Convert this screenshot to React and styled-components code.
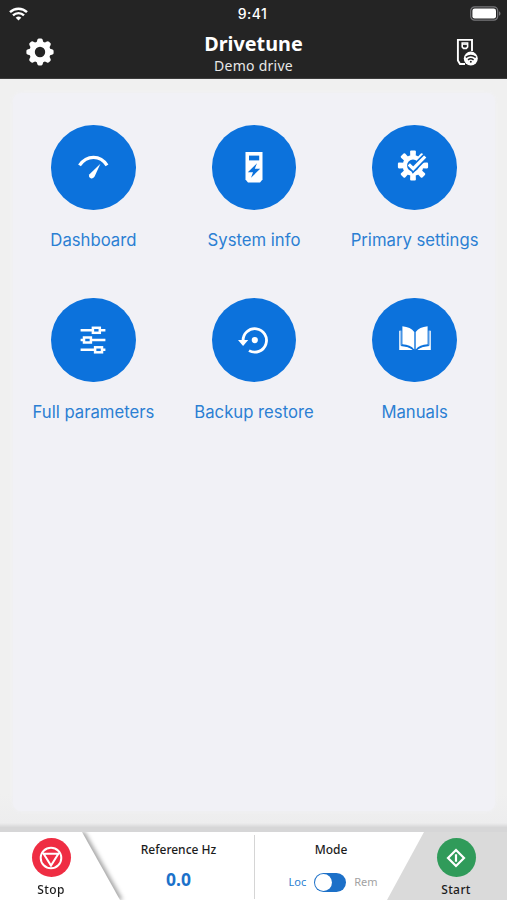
import React from 'react'
import styled, { createGlobalStyle } from 'styled-components'

const GlobalStyle = createGlobalStyle`
  * {
    box-sizing: border-box;
  }
  body {
    margin: 0;
    background-color: #f0f0f0;
    font-family: 'Noto Sans', sans-serif;
  }
`

const teeth = [0, 45, 90, 135, 180, 225, 270, 315]

const WifiIcon = () => (
  <svg width="19" height="14" viewBox="0 0 19 14" fill="none" stroke="#fff" strokeWidth="2.4">
    <path d="M1 5.2a12.2 12.2 0 0 1 17 0" />
    <path d="M4 8.4a7.9 7.9 0 0 1 11 0" />
    <path d="M6.7 10.8a4 4 0 0 1 5.6 0L9.5 13.6z" fill="#fff" stroke="none" />
  </svg>
)

const BatteryIcon = () => (
  <svg width="31" height="15" viewBox="0 0 31 15">
    <rect x="0.7" y="0.8" width="27" height="13.4" rx="4" fill="none" stroke="#77777a" strokeWidth="1.2" />
    <rect x="2.4" y="2.5" width="23.6" height="10" rx="2.3" fill="#fff" />
    <path d="M29 5.2c2 .9 2 3.7 0 4.6z" fill="#77777a" />
  </svg>
)

const GearIcon = () => (
  <svg width="28" height="28" viewBox="-14 -14 28 28" fill="#fff">
    {teeth.map((angle) => (
      <path key={angle} d="M-4-8L-2.5-12.5Q-2.1-13.6-1-13.6H1Q2.1-13.6 2.5-12.5L4-8z" transform={`rotate(${angle})`} />
    ))}
    <circle r="7.9" fill="none" stroke="#fff" strokeWidth="5.4" />
  </svg>
)

const DriveIcon = () => (
  <svg width="22" height="28" viewBox="0 0 22 28" fill="none" stroke="#fff">
    <path d="M16 13V1.9H1.9V22.5L4 26H9" strokeWidth="1.9" />
    <path d="M6.2 5H11.6V9L10.3 10.4H7.5L6.2 9z" strokeWidth="1.6" />
    <path d="M7 6.2h4" strokeWidth="1.3" />
    <circle cx="14.8" cy="20.6" r="7" fill="#fff" stroke="none" />
    <path d="M9.8 19.4q5-4 10 0M12 21.8q2.8-2.1 5.6 0" stroke="#242424" strokeWidth="1.5" />
    <circle cx="14.8" cy="23.8" r="1" fill="#242424" stroke="none" />
  </svg>
)

const DashboardIcon = () => (
  <svg width="36" height="36" viewBox="-18 -18 36 36" fill="#fff">
    <path d="M-13.5-1.6Q-8-9.6 .5-9.6Q9-9.6 14-1.6" fill="none" stroke="#fff" strokeWidth="3.3" />
    <path d="M7.4-3.2L1.6 9.6Q.3 12-2.3 11.2Q-5 9.8-3.5 7.3z" />
  </svg>
)

const SystemIcon = () => (
  <svg width="36" height="36" viewBox="-18 -18 36 36" fill="#fff">
    <path d="M-8.5-15H8.5V12.5L6 15.5H-6L-8.5 12.5z" />
    <path d="M-5-11.4H5.2V-6.6H-5z" fill="#0c72dc" />
    <path d="M3-3.8L-6.2 5.2H-1L-3 10.8L6.2 1.8H.8z" fill="#0c72dc" />
  </svg>
)

const SettingsIcon = () => (
  <svg width="36" height="36" viewBox="-16 -16.5 36 36" fill="#fff">
    {teeth.map((angle) => (
      <path key={angle} d="M-2.7-8L-2.9-14Q-2.9-15.1-1.8-15.1H1.8Q2.9-15.1 2.9-14L2.7-8z" transform={`rotate(${angle})`} />
    ))}
    <circle r="8.2" fill="none" stroke="#fff" strokeWidth="4.5" />
    <path d="M-2-1L.4 3L13-9.8" fill="none" stroke="#0c72dc" strokeWidth="6.5" />
    <path d="M-4.2-1.2L.2 3.2L12.2-9" fill="none" stroke="#fff" strokeWidth="3.2" />
  </svg>
)

const SlidersIcon = () => (
  <svg width="36" height="36" viewBox="-18 -18 36 36" fill="none" stroke="#fff" strokeWidth="2.5">
    <path d="M-12.4-9.7H-.5M7.5-9.7H12.4M-12.4 0H-9.5M-1.5 0H12.4M-12.4 9.8H1.5M9.5 9.8H12.4" />
    <rect x="-.1" y="-12.2" width="6.9" height="5" />
    <rect x="-9" y="-2.5" width="6.9" height="5" />
    <rect x="2.1" y="7.3" width="6.9" height="5" />
  </svg>
)

const RestoreIcon = () => (
  <svg width="36" height="36" viewBox="-18 -18 36 36" fill="#fff">
    <path d="M-10.9 1A11.7 11.7 0 1 1-5 10.6" fill="none" stroke="#fff" strokeWidth="2.8" />
    <path d="M-16 0H-5.8L-10.9 5.9z" />
    <circle cx=".8" cy=".1" r="3.1" />
  </svg>
)

const BookIcon = () => (
  <svg width="36" height="36" viewBox="-18 -18 36 36" fill="#fff">
    <path d="M-12.6-13.8Q-4.3-13-.7-8V9.5Q-4.5 4.8-12.6 4.3zM12.6-13.8Q4.3-13 .7-8V9.5Q4.5 4.8 12.6 4.3z" />
    <path d="M-13.6-9.2H-15.8V10H-2.2Q-6.5 6.5-13.6 6zM13.6-9.2H15.8V10H2.2Q6.5 6.5 13.6 6z" />
    <path d="M-14-9V5.6Q-5.7 5.6-1 10M14-9V5.6Q5.7 5.6 1 10" fill="none" stroke="#0c72dc" strokeWidth=".8" />
  </svg>
)

const StopIcon = () => (
  <svg width="24" height="24" viewBox="-12 -12 24 24" fill="none" stroke="#fff" strokeWidth="2">
    <circle r="10.3" />
    <path d="M-7.4-4.3H7.4L0 7.5z" />
  </svg>
)

const StartIcon = () => (
  <svg width="24" height="24" viewBox="-12 -12 24 24" fill="none" stroke="#fff" strokeWidth="2.2">
    <path d="M0-8L8 0L0 8L-8 0z" />
    <path d="M0-3.8V3.8" />
  </svg>
)

const menu = [
  { label: 'Dashboard', icon: <DashboardIcon /> },
  { label: 'System info', icon: <SystemIcon /> },
  { label: 'Primary settings', icon: <SettingsIcon /> },
  { label: 'Full parameters', icon: <SlidersIcon /> },
  { label: 'Backup restore', icon: <RestoreIcon /> },
  { label: 'Manuals', icon: <BookIcon /> },
]

const App = () => (
  <Screen>
    <GlobalStyle />
    <Header>
      <StatusBar>
        <WifiIcon />
        <Clock>9:41</Clock>
        <BatteryIcon />
      </StatusBar>
      <TitleBar>
        <HeaderButton aria-label="Settings"><GearIcon /></HeaderButton>
        <Titles>
          <Title>Drivetune</Title>
          <Subtitle>Demo drive</Subtitle>
        </Titles>
        <HeaderButton aria-label="Connection"><DriveIcon /></HeaderButton>
      </TitleBar>
    </Header>
    <Content>
      <MenuGrid>
        {menu.map((item) => (
          <MenuItem key={item.label}>
            <IconCircle>{item.icon}</IconCircle>
            <MenuLabel>{item.label}</MenuLabel>
          </MenuItem>
        ))}
      </MenuGrid>
    </Content>
    <ControlBar>
      <StopShadow>
        <StopPanel>
          <ActionCircle $color="#ef2d43"><StopIcon /></ActionCircle>
          <ActionLabel>Stop</ActionLabel>
        </StopPanel>
      </StopShadow>
      <Readout $divider>
        <ReadoutTitle>Reference Hz</ReadoutTitle>
        <Value>0.0</Value>
      </Readout>
      <Readout>
        <ReadoutTitle>Mode</ReadoutTitle>
        <ModeRow>
          <ModeLabel $active>Loc</ModeLabel>
          <Toggle><Knob /></Toggle>
          <ModeLabel>Rem</ModeLabel>
        </ModeRow>
      </Readout>
      <StartPanel>
        <ActionCircle $color="#309b5a"><StartIcon /></ActionCircle>
        <ActionLabel>Start</ActionLabel>
      </StartPanel>
    </ControlBar>
  </Screen>
)

const Screen = styled.div`
  width: 507px;
  height: 900px;
  display: flex;
  flex-direction: column;
  overflow: hidden;
`

const Header = styled.header`
  height: 79px;
  flex-shrink: 0;
  background-color: #242424;
  color: #fff;
  border-bottom: 1px solid #3c3c3c;
`

const StatusBar = styled.div`
  height: 27px;
  padding: 0 6px 0 9px;
  display: grid;
  grid-template-columns: 57px 1fr 60px;
  align-items: center;
  svg:last-child {
    justify-self: end;
  }
`

const Clock = styled.span`
  font-family: Inter, sans-serif;
  font-size: 14px;
  font-weight: 500;
  letter-spacing: 0.4px;
  text-align: center;
  padding-right: 2px;
`

const TitleBar = styled.div`
  height: 51px;
  padding: 0 26px;
  display: flex;
  align-items: center;
  justify-content: space-between;
`

const HeaderButton = styled.button`
  width: 28px;
  height: 28px;
  margin-bottom: 2px;
  padding: 0;
  border: none;
  background: none;
  display: flex;
  justify-content: center;
`

const Titles = styled.div`
  padding-top: 2px;
  display: flex;
  flex-direction: column;
  align-items: center;
`

const Title = styled.h1`
  margin: 0;
  font-size: 19.8px;
  line-height: 24px;
  font-weight: 700;
`

const Subtitle = styled.span`
  font-size: 14px;
  line-height: 20px;
  letter-spacing: 0.25px;
  color: #e8e8e8;
`

const Content = styled.main`
  flex: 1;
  padding: 14px 0 13px 13px;
  background: linear-gradient(#f0f0f0 95%, #ededee 98.8%, #d6d6d7 99.4%, #d6d6d7);
`

const MenuGrid = styled.div`
  width: 482px;
  height: 718px;
  padding-top: 32px;
  display: grid;
  grid-template-columns: repeat(3, 160.6px);
  grid-auto-rows: 172.5px;
  justify-content: center;
  align-content: start;
  border-radius: 8px;
  background-color: #f1f1f6;
  box-shadow: 0 0 4px #f1f1f6;
`

const MenuItem = styled.div`
  display: flex;
  flex-direction: column;
  align-items: center;
`

const IconCircle = styled.div`
  width: 84.6px;
  height: 84.6px;
  border-radius: 50%;
  background-color: #0c72dc;
  display: flex;
  align-items: center;
  justify-content: center;
`

const MenuLabel = styled.span`
  margin-top: 18.4px;
  font-family: Inter, sans-serif;
  font-size: 16.7px;
  line-height: 24px;
  color: #2b7fd3;
  white-space: nowrap;
`

const ControlBar = styled.footer`
  height: 68px;
  flex-shrink: 0;
  display: flex;
  overflow: hidden;
  background-color: #fff;
`

const StopShadow = styled.div`
  margin-right: -20px;
  filter: drop-shadow(3px 0 2px rgba(0, 0, 0, 0.35));
`

const ActionPanel = styled.div`
  height: 68px;
  padding-top: 6px;
  display: flex;
  flex-direction: column;
  align-items: center;
`

const StopPanel = styled(ActionPanel)`
  width: 122px;
  padding-right: 20px;
  background-color: #fff;
  clip-path: polygon(0 0, 82px 0, 120px 100%, 0 100%);
`

const StartPanel = styled(ActionPanel)`
  width: 120px;
  margin-left: -20px;
  padding-left: 18px;
  background-color: #dadada;
  clip-path: polygon(37px 0, 100% 0, 100% 100%, 0 100%);
`

const ActionCircle = styled.div`
  width: 39px;
  height: 39px;
  border-radius: 50%;
  background-color: ${(props) => props.$color};
  display: flex;
  align-items: center;
  justify-content: center;
`

const ActionLabel = styled.span`
  margin-top: 4px;
  font-size: 12px;
  line-height: 17px;
  font-weight: 500;
  letter-spacing: 0.4px;
  color: #1c1c1c;
`

const Readout = styled.div`
  width: ${(props) => (props.$divider ? '153px' : '152px')};
  padding-top: 9px;
  display: flex;
  flex-direction: column;
  align-items: center;
  background: ${(props) => (props.$divider ? 'linear-gradient(#d5d5d5, #d5d5d5) right 3px / 1px 64px no-repeat' : 'none')};
`

const ReadoutTitle = styled.span`
  font-size: 12px;
  line-height: 17px;
  font-weight: 500;
  color: #1c1c1c;
`

const Value = styled.span`
  margin-top: 9px;
  font-size: 17.5px;
  line-height: 24px;
  font-weight: 700;
  color: #1b72ca;
`

const ModeRow = styled.div`
  margin: 14px -4px 0 0;
  display: flex;
  align-items: center;
  gap: 8px;
`

const ModeLabel = styled.span`
  font-size: 11px;
  line-height: 20px;
  color: ${(props) => (props.$active ? '#2c80d2' : '#a2a2a2')};
`

const Toggle = styled.div`
  width: 32px;
  height: 19px;
  padding: 1px;
  border-radius: 10px;
  background-color: #1c70c8;
`

const Knob = styled.div`
  width: 17px;
  height: 17px;
  border-radius: 50%;
  background-color: #fff;
`

export default App
